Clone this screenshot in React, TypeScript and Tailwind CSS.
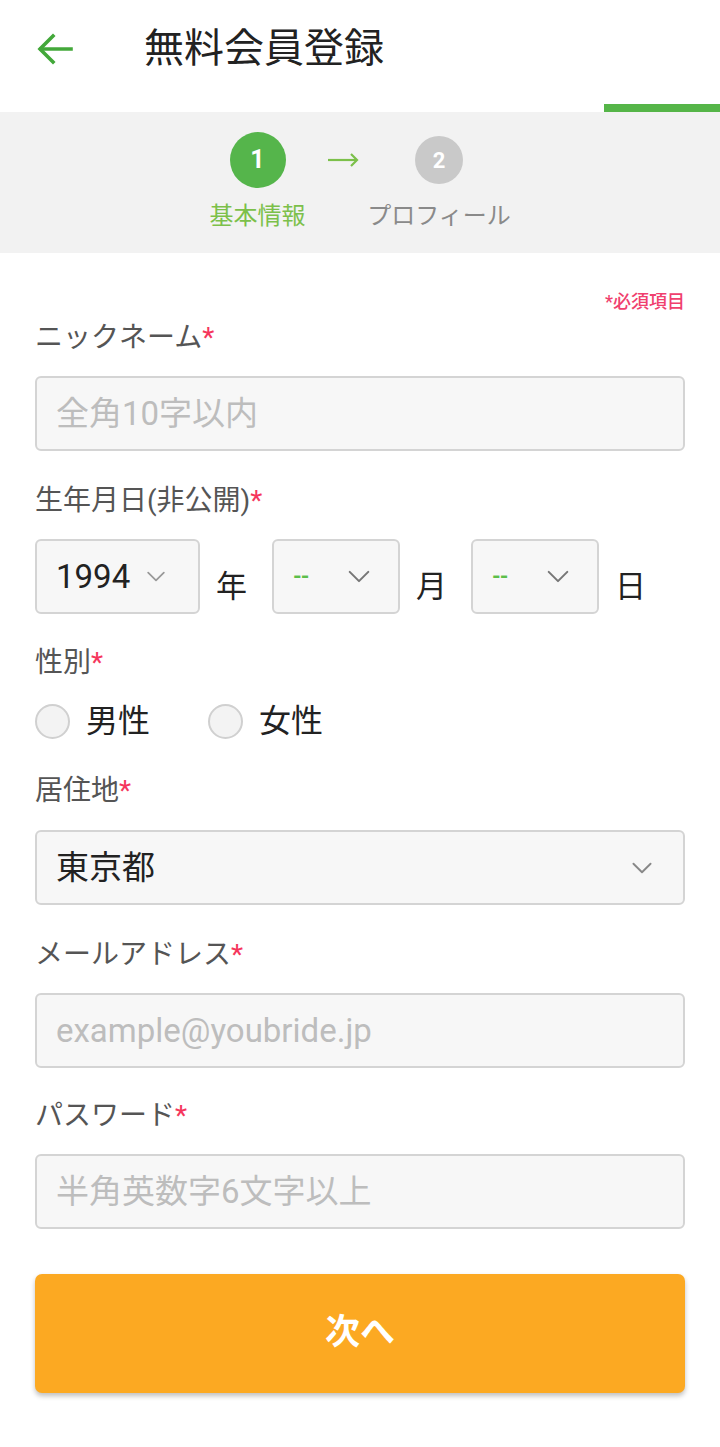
import React from "react";

const FONT = { fontFamily: 'Roboto, "Noto Sans CJK JP", "Noto Sans", sans-serif' };

function Chevron({ className = "" }: { className?: string }) {
  return (
    <svg viewBox="0 0 24 14" className={className} fill="none" stroke="currentColor" strokeWidth={2.2} strokeLinecap="round" strokeLinejoin="round">
      <polyline points="2,2 12,12 22,2" />
    </svg>
  );
}

function Label({ text }: { text: string }) {
  return (
    <div className="text-[28px] leading-[36px] text-[#555]">
      {text}
      <span className="text-[#f5365c]">*</span>
    </div>
  );
}

function TextField({ placeholder }: { placeholder: string }) {
  return (
    <div className="mt-[20px] flex h-[75px] items-center rounded-[6px] border-2 border-[#d4d4d4] bg-[#f7f7f7] px-[19px]">
      <span className="text-[33px] text-[#bdbdbd]">{placeholder}</span>
    </div>
  );
}

function DateSelect({ value, width, muted }: { value: string; width: string; muted?: boolean }) {
  return (
    <div className={`flex h-[75px] items-center rounded-[6px] border-2 border-[#d4d4d4] bg-[#f7f7f7] pl-[19px] ${width}`}>
      {muted ? (
        <>
          <span className="w-[54px] text-[22px] font-bold tracking-[-1px] text-[#5cbf4a]">--</span>
          <Chevron className="h-[13px] w-[24px] text-[#777]" />
        </>
      ) : (
        <>
          <span className="text-[33px] text-[#222]">{value}</span>
          <Chevron className="ml-[16px] h-[11px] w-[20px] text-[#999]" />
        </>
      )}
    </div>
  );
}

function Radio({ text }: { text: string }) {
  return (
    <div className="flex items-center gap-[16px]">
      <div className="h-[35px] w-[35px] rounded-full border-2 border-[#d0d0d0] bg-[#f3f3f3]" />
      <span className="text-[32px] text-[#222]">{text}</span>
    </div>
  );
}

export default function App() {
  return (
    <div className="min-h-[1447px] w-[720px] bg-white" style={FONT}>
      {/* header */}
      <header className="flex h-[98px] items-center">
        <svg viewBox="0 0 36 32" className="ml-[37px] h-[32px] w-[36px] text-[#43a83a]" fill="none" stroke="currentColor" strokeWidth={3.6} strokeLinecap="square">
          <polyline points="16,3 3,16 16,29" />
          <line x1="4" y1="16" x2="34" y2="16" />
        </svg>
        <h1 className="ml-[71px] text-[40px] font-normal text-[#222]">無料会員登録</h1>
      </header>
      <div className="flex h-[14px] items-end justify-end">
        <div className="h-[8px] w-[116px] bg-[#55b548]" />
      </div>

      {/* stepper */}
      <div className="flex h-[141px] justify-center bg-[#f2f2f2] pt-[20px]">
        <div className="flex w-[96px] flex-col items-center">
          <div className="flex h-[56px] w-[56px] items-center justify-center rounded-full bg-[#55b54b] text-[25px] font-bold text-white">1</div>
          <div className="mt-[12px] whitespace-nowrap text-[24px] leading-[32px] text-[#7cc04a]">基本情報</div>
        </div>
        <div className="flex h-[56px] w-[62px] items-center justify-center pl-[12px]">
          <svg viewBox="0 0 32 14" className="h-[14px] w-[32px] text-[#7cc04a]" fill="none" stroke="currentColor" strokeWidth={2.2}>
            <line x1="1" y1="7" x2="30" y2="7" />
            <polyline points="24,1 30,7 24,13" />
          </svg>
        </div>
        <div className="flex w-[143px] flex-col items-center">
          <div className="flex h-[56px] items-center">
            <div className="flex h-[48px] w-[48px] items-center justify-center rounded-full bg-[#c9c9c9] text-[22px] font-bold text-white">2</div>
          </div>
          <div className="mt-[12px] whitespace-nowrap text-[24px] leading-[32px] text-[#8a8a8a]">プロフィール</div>
        </div>
      </div>

      {/* form */}
      <div className="px-[35px] pt-[38px]">
        <div className="text-right text-[18px] font-medium leading-[22px] text-[#f0406e]">*必須項目</div>

        <div className="mt-[7px]">
          <Label text="ニックネーム" />
          <TextField placeholder="全角10字以内" />
        </div>

        <div className="mt-[32px]">
          <Label text="生年月日(非公開)" />
          <div className="mt-[20px] flex items-center">
            <DateSelect value="1994" width="w-[165px]" />
            <span className="ml-[16px] mt-[22px] w-[56px] text-[31px] text-[#222]">年</span>
            <DateSelect value="--" width="w-[128px]" muted />
            <span className="ml-[16px] mt-[22px] w-[55px] text-[31px] text-[#222]">月</span>
            <DateSelect value="--" width="w-[128px]" muted />
            <span className="ml-[16px] mt-[22px] text-[31px] text-[#222]">日</span>
          </div>
        </div>

        <div className="mt-[31px]">
          <Label text="性別" />
          <div className="mt-[20px] flex h-[40px] items-center gap-[58px]">
            <Radio text="男性" />
            <Radio text="女性" />
          </div>
        </div>

        <div className="mt-[32px]">
          <Label text="居住地" />
          <div className="mt-[21px] flex h-[75px] items-center justify-between rounded-[6px] border-2 border-[#d4d4d4] bg-[#f7f7f7] pl-[19px] pr-[29px]">
            <span className="text-[33px] text-[#222]">東京都</span>
            <Chevron className="h-[12px] w-[24px] text-[#888]" />
          </div>
        </div>

        <div className="mt-[32px]">
          <Label text="メールアドレス" />
          <TextField placeholder="example@youbride.jp" />
        </div>

        <div className="mt-[30px]">
          <Label text="パスワード" />
          <TextField placeholder="半角英数字6文字以上" />
        </div>

        <button className="mt-[45px] flex h-[119px] w-full items-center justify-center rounded-[7px] bg-[#fca922] text-[35px] font-bold text-white shadow-[0_3px_5px_rgba(0,0,0,0.25)]">
          次へ
        </button>
      </div>
    </div>
  );
}
